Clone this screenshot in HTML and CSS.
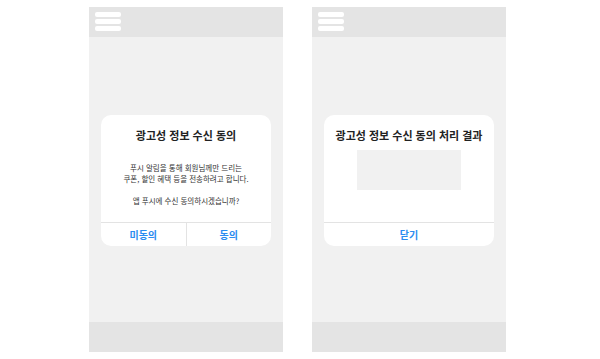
FILE: index.html
```html
<!DOCTYPE html>
<html lang="ko">

<head>
    <meta charset="UTF-8">
    <meta name="viewport" content="width=device-width, initial-scale=1.0">
    <title>광고성 정보 수신 동의</title>
    <link rel="stylesheet" href="styles.css">
</head>

<body>

    <div class="screens">
        <!-- 동의 요청 화면 -->
        <div class="phone">
            <div class="phone-header">
                <div class="menu-icon">
                    <span></span>
                    <span></span>
                    <span></span>
                </div>
            </div>
            <div class="phone-body">
                <div class="dialog">
                    <div class="dialog-content">
                        <h3 class="dialog-title">광고성 정보 수신 동의</h3>
                        <p class="dialog-text">푸시 알림을 통해 회원님께만 드리는<br>쿠폰, 할인 혜택 등을 전송하려고 합니다.</p>
                        <p class="dialog-text">앱 푸시에 수신 동의하시겠습니까?</p>
                    </div>
                    <div class="dialog-buttons">
                        <button class="dialog-btn">미동의</button>
                        <button class="dialog-btn">동의</button>
                    </div>
                </div>
            </div>
            <div class="phone-footer"></div>
        </div>

        <!-- 처리 결과 화면 -->
        <div class="phone">
            <div class="phone-header">
                <div class="menu-icon">
                    <span></span>
                    <span></span>
                    <span></span>
                </div>
            </div>
            <div class="phone-body">
                <div class="dialog">
                    <div class="dialog-content">
                        <h3 class="dialog-title">광고성 정보 수신 동의 처리 결과</h3>
                        <div class="result-box"></div>
                    </div>
                    <div class="dialog-buttons">
                        <button class="dialog-btn">닫기</button>
                    </div>
                </div>
            </div>
            <div class="phone-footer"></div>
        </div>
    </div>

</body>

</html>
```

FILE: styles.css
```css
body {
    margin: 0;
    padding: 0;
    background-color: #fff;
    font-family: 'Noto Sans CJK KR', 'Noto Sans', sans-serif;
    color: #222;
}

.screens {
    display: flex;
    gap: 29px;
    padding: 7px 0 0 89px;
}

.phone {
    width: 194px;
    height: 345px;
    display: flex;
    flex-direction: column;
    background-color: #f1f1f1;
}

.phone-header {
    height: 30px;
    background-color: #e4e4e4;
    display: flex;
    align-items: center;
    padding-left: 6px;
}

.menu-icon {
    display: flex;
    flex-direction: column;
    gap: 2px;
    margin-top: -2px;
}

.menu-icon span {
    display: block;
    width: 26px;
    height: 5px;
    border-radius: 2px;
    background-color: #fff;
}

.phone-body {
    flex-grow: 1;
    display: flex;
    align-items: center;
    justify-content: center;
    padding-top: 2px;
}

.phone-footer {
    height: 30px;
    background-color: #e4e4e4;
}

.dialog {
    width: 170px;
    background-color: #fff;
    border-radius: 10px;
    overflow: hidden;
}

.dialog-content {
    height: 107px;
    box-sizing: border-box;
    padding-top: 13px;
    display: flex;
    flex-direction: column;
    align-items: center;
}

.dialog-title {
    margin: 0 0 20px;
    font-size: 11px;
    line-height: 14px;
    font-weight: bold;
    white-space: nowrap;
}

.dialog-text {
    margin: 0 0 11px;
    font-size: 7.5px;
    line-height: 11px;
    text-align: center;
    color: #333;
}

.result-box {
    width: 104px;
    height: 40px;
    margin-top: -12px;
    background-color: #f1f1f1;
}

.dialog-buttons {
    display: flex;
    border-top: 1px solid #e3e3e3;
    height: 23px;
}

.dialog-btn {
    flex: 1;
    border: none;
    background: none;
    padding: 0;
    font-family: inherit;
    font-size: 10px;
    font-weight: bold;
    color: #2a8cf0;
}

.dialog-btn + .dialog-btn {
    border-left: 1px solid #e3e3e3;
}
```
